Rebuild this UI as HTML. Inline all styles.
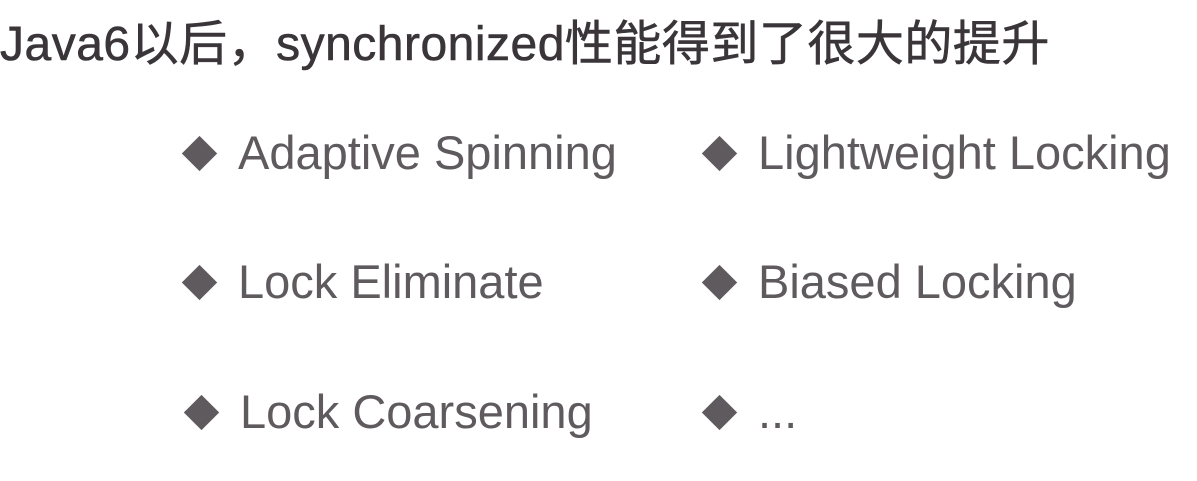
<!DOCTYPE html>
<html><head><meta charset="utf-8"><style>
html,body{margin:0;padding:0;background:#fff;width:1197px;height:481px;overflow:hidden;position:relative}
.t{position:absolute;left:0;top:4px;font:48px "Liberation Sans","Noto Sans CJK SC",sans-serif;color:#3a3539;white-space:nowrap;-webkit-text-stroke:0.6px #3a3539;letter-spacing:0.5px}
.i{position:absolute;font:47px "Liberation Sans",sans-serif;color:#5f5a5e;white-space:nowrap;line-height:50px}
.d{position:absolute;width:25px;height:25px;background:#5f5a5e;transform:rotate(45deg)}
</style></head><body>
<div class="t">Java6以后，synchronized性能得到了很大的提升</div>
<div class="d" style="left:187px;top:141px"></div><div class="i" style="left:238px;top:128px">Adaptive Spinning</div>
<div class="d" style="left:707px;top:141px"></div><div class="i" style="left:758px;top:128px">Lightweight Locking</div>
<div class="d" style="left:187px;top:270px"></div><div class="i" style="left:238px;top:257px">Lock Eliminate</div>
<div class="d" style="left:707px;top:270px"></div><div class="i" style="left:758px;top:257px">Biased Locking</div>
<div class="d" style="left:189px;top:400px"></div><div class="i" style="left:240px;top:387px">Lock Coarsening</div>
<div class="d" style="left:707px;top:400px"></div><div class="i" style="left:758px;top:387px">...</div>
</body></html>
